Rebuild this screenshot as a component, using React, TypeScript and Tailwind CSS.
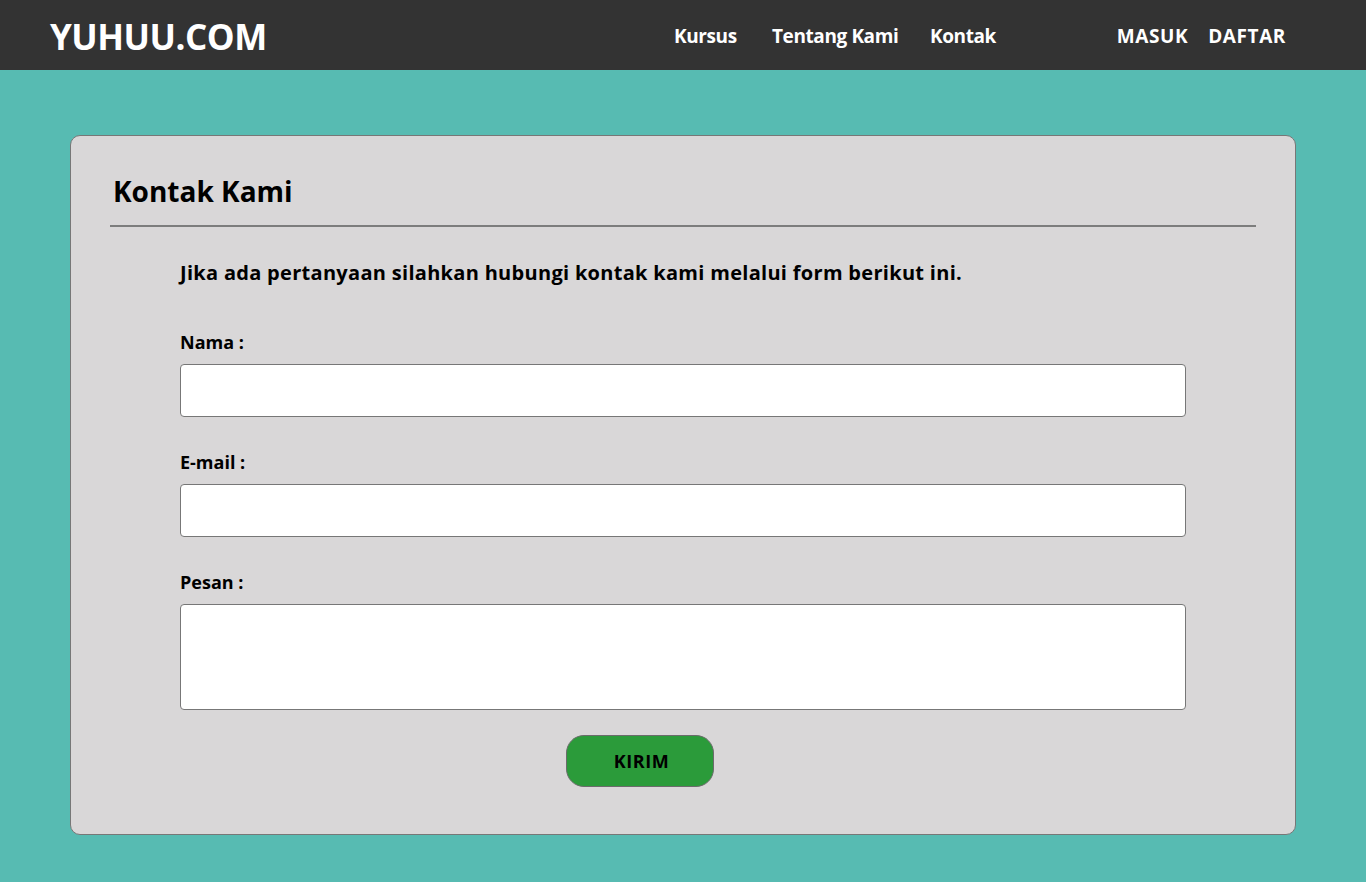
export default function App() {
  return (
    <div
      className="min-h-screen bg-[#57bbb2] flex flex-col"
      style={{ fontFamily: '"Open Sans", "Noto Sans", sans-serif' }}
    >
      {/* Header */}
      <header className="h-[70px] bg-[#333333] flex items-center px-[50px] pt-[3px] text-white font-bold">
        <a href="#" className="w-[624px] text-[35px] leading-none tracking-[-0.5px]">
          YUHUU.COM
        </a>
        <nav className="flex items-center text-[19px] tracking-[-0.4px]">
          <a href="#" className="w-[98px]">Kursus</a>
          <a href="#" className="w-[158px]">Tentang Kami</a>
          <a href="#">Kontak</a>
        </nav>
        <div className="ml-auto mr-[30px] flex items-center gap-[20px] text-[19px] tracking-[0.6px]">
          <a href="#">MASUK</a>
          <a href="#">DAFTAR</a>
        </div>
      </header>

      {/* Content */}
      <main className="px-[70px] pt-[65px] pb-[47px]">
        <div className="h-[700px] bg-[#d9d7d8] border border-[#777777] rounded-[10px] px-[39px] pt-[35px]">
          <h1 className="pl-[3px] text-[28px] font-bold text-black leading-[40px]">
            Kontak Kami
          </h1>
          <hr className="mt-[14px] border-0 h-[2px] bg-[#7d7d7d]" />

          <form className="px-[70px] pt-[32px] text-black font-bold">
            <p className="text-[20px] leading-[28px] tracking-[0.3px]">
              Jika ada pertanyaan silahkan hubungi kontak kami melalui form berikut ini.
            </p>

            <label className="block mt-[43px] text-[18px] leading-[24px]">Nama :</label>
            <input
              type="text"
              className="mt-[10px] block w-full h-[53px] bg-white border border-[#777777] rounded-[4px]"
            />

            <label className="block mt-[33px] text-[18px] leading-[24px]">E-mail :</label>
            <input
              type="email"
              className="mt-[10px] block w-full h-[53px] bg-white border border-[#777777] rounded-[4px]"
            />

            <label className="block mt-[33px] text-[18px] leading-[24px]">Pesan :</label>
            <textarea className="mt-[10px] block w-full h-[106px] bg-white border border-[#777777] rounded-[4px] resize-none" />

            <div className="mt-[25px] pl-[386px]">
              <button
                type="button"
                className="w-[148px] h-[52px] bg-[#2b9b3a] border border-[#6b6b6b] rounded-[18px] pl-[3px] text-[18px] tracking-[0.6px] font-bold text-black"
              >
                KIRIM
              </button>
            </div>
          </form>
        </div>
      </main>
    </div>
  );
}
